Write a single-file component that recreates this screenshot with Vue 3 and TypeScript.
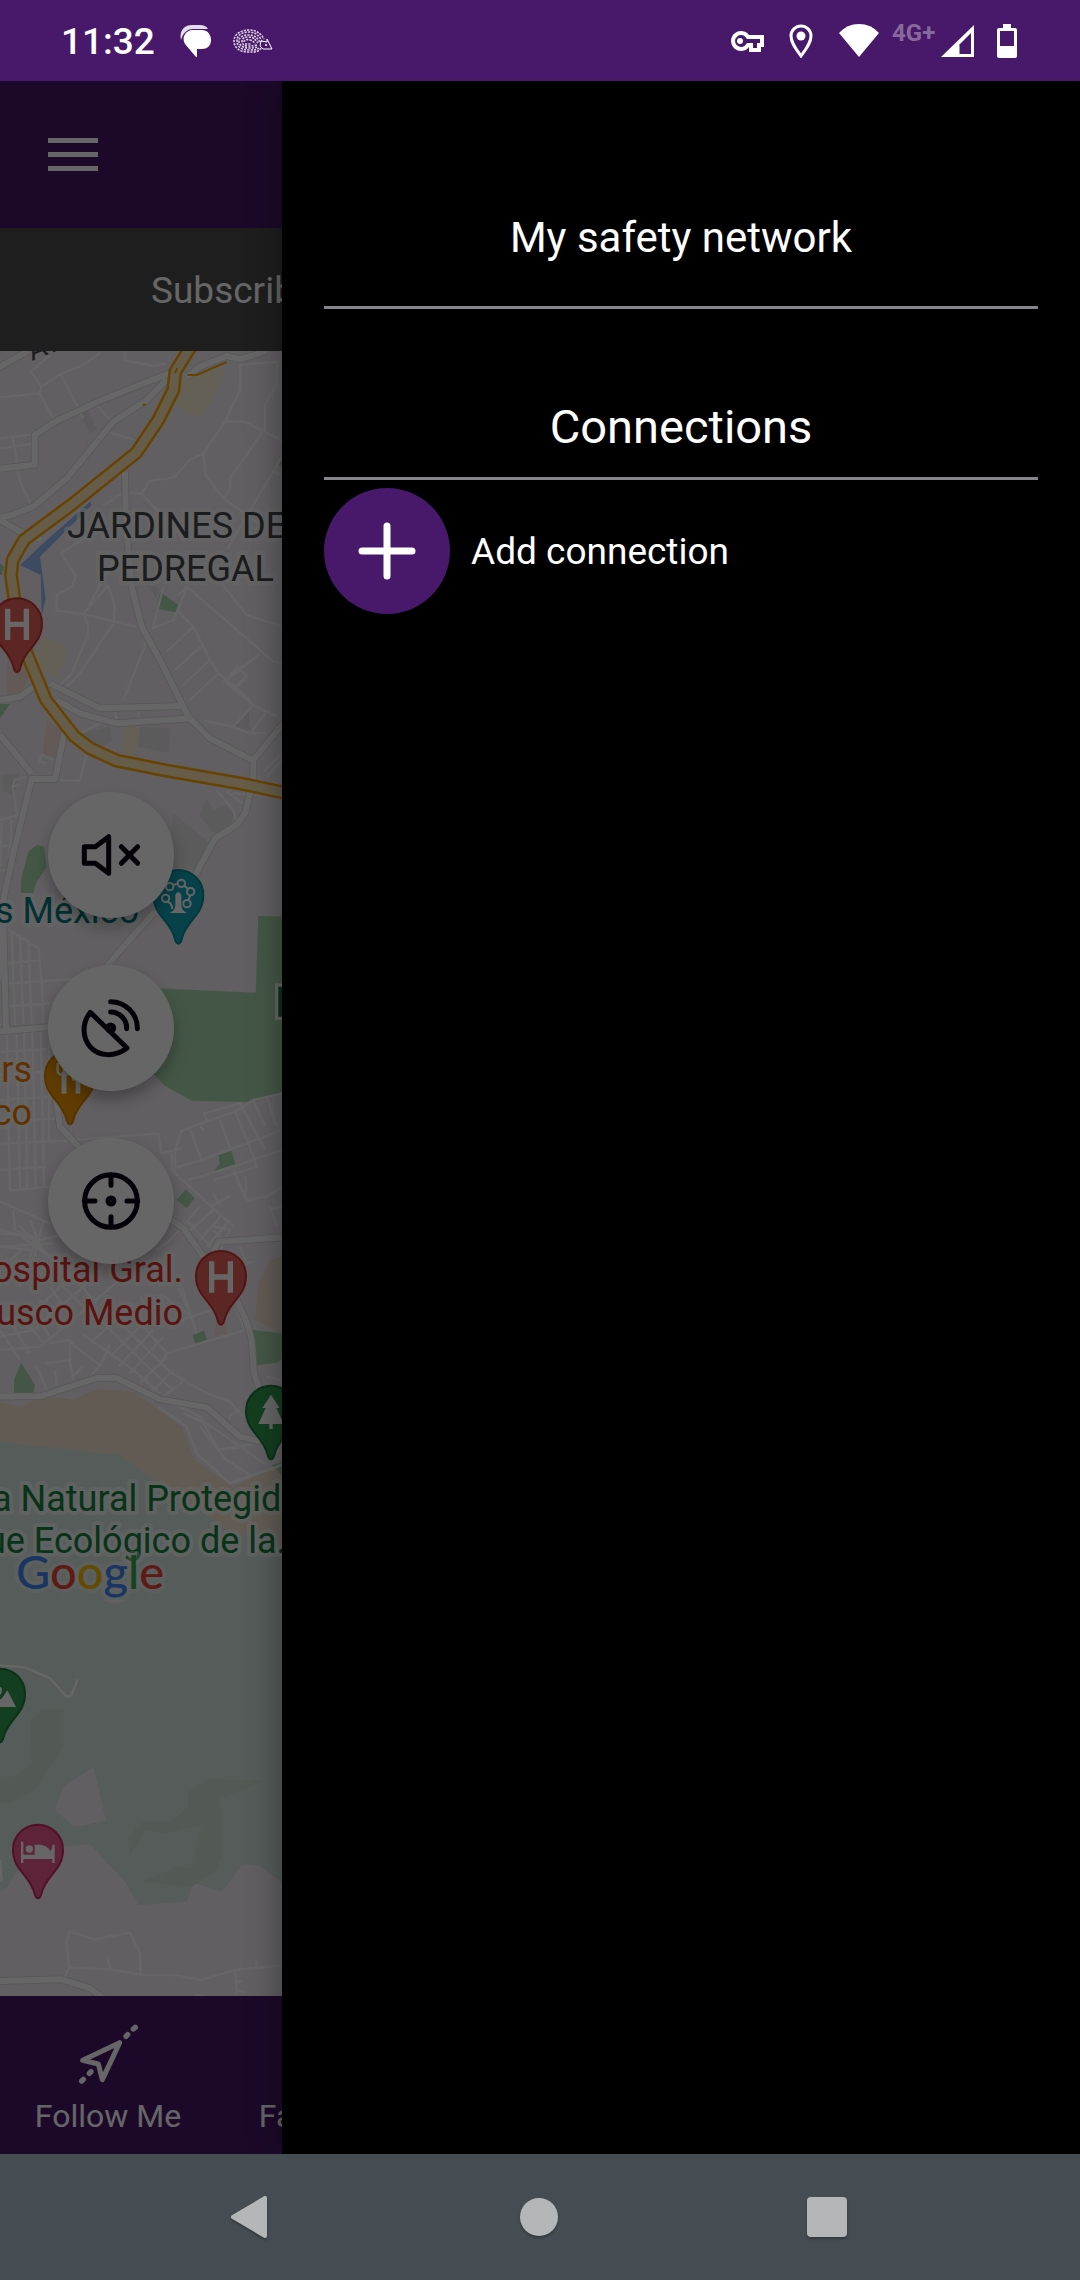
<script setup lang="ts">
interface Shape {
  y: number
  d: string
}
interface Pin {
  x: number
  y: number
  kind: 'hospital' | 'fun' | 'food' | 'tree' | 'peak' | 'hotel'
}
interface Label {
  text: string
  x: number
  y: number
  tone: string
  anchor: 'start' | 'end'
}

// Map geometry is drawn on a grid three times finer than the screen.
const parks: Shape[] = [
  { y: 1020, d: 'M470 805L480 755L535 795L530 818ZM0 670L12 680L5 705H0ZM835 375L850 350V380Z' },
  { y: 2040, d: 'M63 638V600L85 515L110 495L132 500L140 560L110 605L100 640ZM0 72H30L0 115Z' },
  { y: 2820, d: 'M775 -72L1400 -60V300L850 458L760 486L700 485L575 482L495 438L440 380L470 145L767 158Z' },
  { y: 2820, d: 'M655 645L695 632L706 672L642 693L660 670ZM530 780L558 748L584 775L560 805Z' },
  { y: 3660, d: 'M578 345L612 332L622 360L585 370ZM42 480L63 428L105 495L100 520H42ZM755 330L850 340V415L830 428L770 436ZM815 735L850 725V770Z' },
]
const sand: Shape[] = [
  { y: 3660, d: 'M0 545L60 560L130 530L220 538L290 508L400 515L470 565L545 620L585 720L700 800L850 730V985L800 945H700L600 870L480 790L360 705L0 665Z' },
  { y: 3660, d: 'M765 300L775 190L810 120L850 110V345Z' },
]
const plazas: Shape[] = [
  { y: 1020, d: 'M520 190L560 105L678 80L660 130L610 225L580 230ZM125 890L195 915L198 950L170 1015L100 970Z' },
  { y: 2040, d: 'M370 140H418L408 230L370 225Z' },
]
const clinics: Shape[] = [
  { y: 1020, d: 'M20 950L60 940L85 1010L65 1060L20 1065Z' },
  { y: 2040, d: 'M140 120L185 150L165 235L128 220Z' },
  { y: 3660, d: 'M650 290L675 290L682 340L642 350Z' },
]
const blocks: Shape[] = [
  { y: 1020, d: 'M230 205L260 200L290 270L270 280ZM440 735L480 745L470 775Z' },
  { y: 2040, d: 'M420 140L510 145L505 218L410 200ZM240 160L330 140L335 185L300 205L245 190ZM620 355L640 390L670 375L700 400L695 430L640 460L598 405ZM520 400L625 485L590 570L500 560Z' },
  { y: 2040, d: 'M5 285L60 280L40 345L10 335ZM705 140L745 90L750 150Z' },
]
const forest =
  'M0 4325L360 4365L480 4450L600 4530L700 4605L800 4605L850 4645L1400 4800V5500L850 5650L780 5597L727 5595L665 5675L580 5648L560 5705L415 5715L375 5645L270 5532L190 5540L100 5550L60 5600L20 5665L0 5675Z'
const clearing = 'M280 5300L318 5463L222 5480L165 5430L190 5360ZM310 4800A40 20 0 0 0 380 4800Z'
const hills = [
  'M92 5160L130 5128H190V5235L110 5365L25 5410L0 5405V5330L45 5330L95 5290Z',
  'M565 5375L625 5337L790 5342L655 5400L665 5440V5570L650 5610L575 5660L425 5645L530 5600L575 5605L605 5475L500 5500L435 5490L390 5565L385 5515L425 5465H515L565 5420Z',
]
const streets: Shape[] = [
  {
    y: 1020,
    d: 'M150 45L92 95L125 140L118 160L0 172M125 140L182 102L250 75L300 38M118 160L160 235M182 102L250 235M375 33V62L465 78L500 70M290 195L330 240M330 278L405 300M0 295L104 283M0 325L95 312M38 290L60 425L95 500M720 70V150L675 245L610 340L570 360L523 412L447 424L425 462L375 455L310 495M675 245H735L785 272L846 302M720 75L830 65V130L795 195V265L690 415L692 445L670 475M610 340L617 405L670 475L790 560M846 350L680 630M820 395L846 405M425 462L500 540L560 600M183 640L228 708L215 740L170 765V812L250 822L410 860M183 640L260 590M250 822L325 735M265 800L345 650M325 735L345 805L340 850L240 1000L200 1040M250 822L265 855L262 890L215 1000L180 1035M455 865L520 840L560 745M460 860L490 740M440 905L370 1080M535 765L560 740L820 965L846 972M535 815L580 860L630 960L655 1000L750 1080M580 860L500 935M610 915L525 990M630 960L550 1035M655 1000L570 1080M670 735L740 825L846 860M780 940L680 1020L712 982L740 1007L700 1050',
  },
  {
    y: 2040,
    d: 'M670 0L760 75L800 95L830 110M700 25L730 0M760 75L700 140M800 95L755 155M610 122L690 138L750 160L800 158M346 95L350 125M415 95L417 125M240 300L262 215M180 302H240L245 290M160 240L125 225L118 245L140 250M80 290L45 300L38 320L60 315M38 320L50 400M0 420L60 405M5 425L0 560M35 420L28 540M0 500L40 495M0 572L20 570M320 120L240 160M680 335L730 370M790 275L846 220M800 290L846 240M700 340L790 345M650 330L700 390L710 430',
  },
  {
    y: 2820,
    d: 'M12 -40L115 25L125 120L130 250M35 -30L45 255M60 -15L70 250M85 0L95 250M20 70L118 62M20 130L210 118M30 198L150 190M20 280L30 750M50 275L60 745M72 272L82 742M97 270L107 740M122 270L132 738M147 300V600M0 335L140 328M0 405L130 395M0 480L160 470M0 545L170 535M0 610L200 602M0 690L140 680M30 752L150 740M200 602L475 580L485 640L545 625M545 572L620 545L705 515L760 480L846 460M545 572L525 630V700L700 860M620 545L612 520L720 490L795 630M570 570L605 660M600 560L612 570M660 540L690 625M705 515L745 610L770 680L640 720M760 480L795 560M800 470L830 560M530 682L605 660L700 625L846 570M565 720L700 680L846 630M515 640V690L680 840M700 690L740 780L800 770L846 740M735 710L740 745L730 770M655 785L680 770M660 795L640 760M630 800L690 770M810 800L830 860M810 810L846 797M640 810L560 880L520 830M670 820L600 900M600 800L510 900L470 930M560 840L640 930M640 860L690 870L650 950M0 785L150 850M40 810L45 870L110 895M0 880L60 885L160 960M110 895L30 960M130 840L100 960M60 860L190 990M0 920L90 930',
  },
  {
    y: 3660,
    d: 'M0 30L120 60L200 40M90 0L130 100M0 80L160 70M110 55L60 200M0 350L100 330L250 200L330 120M0 300L90 290L230 150M0 390L120 380L300 230L370 170M0 330L60 420M20 290L90 400M50 270L130 370M90 260L150 350M120 240L190 330M150 200L220 300M180 190L260 270M210 160L290 250M150 370L210 360L225 380L305 440M135 430L210 420M210 360V430L220 480M165 450L170 495M110 440L140 510M330 370L305 430L270 470M215 475L245 440M250 345L330 400L400 450L480 520M300 300L470 465L520 510M330 280L515 460L620 520L690 545L730 590M370 250L500 400M420 230L470 300M270 370L400 250M330 410L440 300M355 440L460 330M390 460L490 350M420 490L500 410M450 520L520 450M475 540L530 500M500 400L735 330L700 240M500 400L475 440M535 205L575 290L520 310M575 290L650 265M480 220L575 290M545 200L590 340M640 30L680 70M690 0L620 80M720 80L740 130L760 125M520 550L600 590L655 690M550 580L620 610L800 735M475 560L560 620L590 700L690 790L846 735M655 690L735 680M600 620L680 720L750 765M655 690L770 670M710 575L690 585V600M545 480L540 495M800 470L846 480',
  },
  {
    y: 4800,
    d: 'M0 196L75 202L150 235L200 290L213 288L233 238M195 1130L207 1103L200 1025L208 995L284 1018L390 998L421 1060V1122M207 1103L330 1108L421 1124L520 1125L605 1140L705 1110L846 1096M330 1108L322 1070M770 1105V1080M706 1112L710 1185M710 1148L725 1142M710 1170L738 1176M585 1186L615 1190M0 780L5 845',
  },
]
const roads: Shape[] = [
  {
    y: 1020,
    d: 'M-10 85L85 33M-10 387L104 374V285L165 245L290 187L430 130L510 100M-10 535L35 525L100 500L200 415L340 245L440 180L500 120M375 395L378 560L395 740L425 860L480 960L565 1130L630 1195L760 1262M0 540L60 575L125 600M560 110L600 80L680 48L720 58L800 33',
  },
  {
    y: 2040,
    d: 'M110 15L60 50L0 60M150 10L300 85L545 78M170 60L240 100L350 130L575 115M0 165L95 280M195 150L165 297H95L40 520L10 660L-5 900M850 130L760 240V300L735 400L710 435L645 475L600 560L540 670L460 700L370 800L320 860',
  },
  {
    y: 2820,
    d: 'M10 -60L18 270M-10 275L160 260M165 460L180 560L240 625M500 830L550 865L625 970L655 905L850 892',
  },
  {
    y: 3660,
    d: 'M710 240L740 305L755 360L762 460L780 510M-10 530L125 528L290 474H350L480 538L620 562L720 650L780 665',
  },
  { y: 4800, d: 'M-10 1143L185 1138L270 1165L310 1195' },
]
const highway =
  'M572 1040L526 1115L520 1170L475 1260L409 1358L220 1510L72 1620L38 1680L33 1725L45 1810L80 1960L138 2100L222 2208L270 2245L350 2282L500 2312L720 2350L900 2388'

const pins: Pin[] = [
  { x: 51, y: 1870, kind: 'hospital' },
  { x: 535, y: 2685, kind: 'fun' },
  { x: 210, y: 3227, kind: 'food' },
  { x: 663, y: 3828, kind: 'hospital' },
  { x: 813, y: 4232, kind: 'tree' },
  { x: 0, y: 5081, kind: 'peak' },
  { x: 114, y: 5549, kind: 'hotel' },
]
const labels: Label[] = [
  { text: 'JARDINES DEL', x: 67, y: 538, tone: 'district', anchor: 'start' },
  { text: 'PEDREGAL', x: 97, y: 581, tone: 'district', anchor: 'start' },
  { text: 'Six Flags México', x: 139, y: 923, tone: 'fun', anchor: 'end' },
  { text: 'rs', x: 32, y: 1082, tone: 'food', anchor: 'end' },
  { text: 'co', x: 32, y: 1125, tone: 'food', anchor: 'end' },
  { text: 'Hospital Gral.', x: 183, y: 1282, tone: 'health', anchor: 'end' },
  { text: 'Ajusco Medio', x: 183, y: 1325, tone: 'health', anchor: 'end' },
  { text: 'a Natural Protegida', x: -8, y: 1511, tone: 'nature', anchor: 'start' },
  { text: 'ue Ecológico de la...', x: -14, y: 1553, tone: 'nature', anchor: 'start' },
]
const logo: [string, string][] = [
  ['G', '#4285f4'],
  ['o', '#ea4335'],
  ['o', '#fbbc04'],
  ['g', '#4285f4'],
  ['l', '#34a853'],
  ['e', '#ea4335'],
]
</script>

<template>
  <div class="phone">
    <header class="status">
      <div class="status-left">
        <time class="clock">11:32</time>
        <svg class="chat" width="32" height="32" viewBox="0 0 32 32" fill="#fff">
          <path d="M1 15C-1 6 4 0 12 0h8c4 0 6 1 8 4H13C7 4 3 8 1 15z" fill-opacity=".85" />
          <path d="M13 5h9c5 0 9 4 9 10s-4 9-9 9h-5v8h-1L5 19C1 12 6 5 13 5z" />
        </svg>
        <svg class="hedgehog" width="40" height="26" viewBox="0 0 40 26" fill="none" stroke="#fff">
          <g stroke-width="1.6" stroke-dasharray="2.2 1.1" stroke-opacity=".8">
            <path d="M28 20C26 24 22 24 15 24C6 24 1 19 1 13C1 6 8 2 16 2S28 6 31 11" />
            <path d="M26 20C24 22 20 22 15 22C8 22 4 18 4 13C4 7 9 4 16 4S26 8 29 13" />
            <path d="M24 19C22 20 19 20 15 20C10 20 6 17 6 13C6 9 10 7 16 7S24 10 27 14" />
            <path d="M24 17C20 18 18 18 15 18C11 18 9 16 9 13C9 10 12 9 16 9S22 11 25 15" />
            <path d="M11 14C11 12 14 11 17 12S21 14 22 16M12 16H18" />
          </g>
          <path d="M28 13L34 14V11L36 15L39 21H30L27 18Z" />
          <circle cx="33" cy="17" r="1" fill="#fff" stroke="none" />
        </svg>
      </div>
      <div class="status-right">
        <svg width="42" height="34" viewBox="0 0 42 34">
          <path d="M22 13A8 8 0 1 0 22 21H25V26H33V21H36V13Z" fill="none" stroke="#fff" stroke-width="4" />
          <circle cx="14" cy="17" r="3" fill="#fff" />
        </svg>
        <svg width="50" height="34" viewBox="0 0 50 34">
          <path d="M25 32C20 25 15 19 15 12a10 10 0 0 1 20 0c0 7-5 13-10 20z" fill="none" stroke="#fff" stroke-width="3" />
          <circle cx="25" cy="12" r="4.500" fill="#fff" />
        </svg>
        <svg width="50" height="34" viewBox="0 0 50 34">
          <path d="M5 9Q13 0 25 0T45 9L25 33Z" fill="#fff" />
        </svg>
        <div class="mobile">
          <span class="network">4G+</span>
          <svg width="36" height="34" viewBox="0 0 36 34">
            <path d="M34 1V33H1Z" fill="#fff" />
            <path d="M31 9V30H19.500V20.500Z" fill="#48186a" />
          </svg>
        </div>
        <svg width="46" height="34" viewBox="0 0 46 34">
          <path d="M13 4H19V0H27V4H31Q33 4 33 6V32Q33 34 31 34H15Q13 34 13 32V6Q13 4 15 4Z" fill="#fff" />
          <path d="M16 7H30V22H16Z" fill="#48186a" />
        </svg>
      </div>
    </header>

    <div class="stage">
      <main class="home">
        <div class="topbar">
          <button class="menu" type="button" aria-label="Menu"><i></i><i></i><i></i></button>
        </div>
        <div class="notice">Subscribe</div>
        <section class="map">
          <svg class="canvas" viewBox="0 351 1080 1645" preserveAspectRatio="xMinYMin slice">
            <g transform="scale(.333333)">
              <path :d="forest" fill="#d5e6de" />
              <path v-for="d in hills" :key="d" :d="d" fill="#cfe0d5" />
              <path :d="clearing" fill="#f5edf5" />
              <path v-for="s in blocks" :key="s.d" :d="s.d" :transform="`translate(0 ${s.y})`" fill="#e4e4e4" />
              <path v-for="s in sand" :key="s.d" :d="s.d" :transform="`translate(0 ${s.y})`" fill="#f5e4d2" />
              <path v-for="s in plazas" :key="s.d" :d="s.d" :transform="`translate(0 ${s.y})`" fill="#fbf0d4" />
              <path v-for="s in clinics" :key="s.d" :d="s.d" :transform="`translate(0 ${s.y})`" fill="#f8e2dc" />
              <path v-for="s in parks" :key="s.d" :d="s.d" :transform="`translate(0 ${s.y})`" fill="#aad9b0" />
              <path d="M60 1695L130 1630L270 1505L275 1515L120 1670L137 1795L125 1850L122 1725Z" fill="#96bcf5" />
              <path v-for="s in streets" :key="s.d" :d="s.d" :transform="`translate(0 ${s.y})`" class="street" />
              <path v-for="s in roads" :key="'c' + s.y" :d="s.d" :transform="`translate(0 ${s.y})`" class="casing" />
              <path v-for="s in roads" :key="'r' + s.y" :d="s.d" :transform="`translate(0 ${s.y})`" class="road" />
              <path :d="highway" class="highway-edge" />
              <path :d="highway" class="highway" />
              <path d="M562 1125H590L680 1086M524 1120L532 1105M428 1214H438" class="ramp" />
              <path d="M830 2955H900V3055H830Z" fill="#1e8240" stroke="#fff" stroke-width="10" />
            </g>

            <text class="street-name" x="32" y="361" transform="rotate(-22 32 361)">Av</text>
            <text v-for="l in labels" :key="l.text" :class="['label', l.tone]" :x="l.x" :y="l.y" :text-anchor="l.anchor">{{ l.text }}</text>

            <g transform="scale(.333333)">
              <g v-for="(p, i) in pins" :key="i" :transform="`translate(${p.x} ${p.y})`" :class="['pin', p.kind]">
                <path
                  class="drop"
                  d="M0 146C-5 146-8 141-10 133C-22 76-75 64-75 0A75 75 0 1 1 75 0C75 64 22 76 10 133C8 141 5 146 0 146Z"
                />
                <path v-if="p.kind === 'hospital'" d="M-28 -44V50M28 -44V50M-28 3H28" fill="none" stroke="#fff" stroke-width="16" />
                <g v-else-if="p.kind === 'fun'">
                  <path d="M-26 54Q-9 46-9 30V0Q0-18 9 0V30Q9 46 26 54Z" fill="#fff" />
                  <g fill="none" stroke="#fff" stroke-width="6">
                    <circle cx="-38" cy="10" r="11" /><circle cx="-26" cy="-25" r="11" /><circle cx="9" cy="-35" r="11" />
                    <circle cx="37" cy="-10" r="11" /><circle cx="26" cy="26" r="11" />
                    <path d="M-36 20Q-20 20-18 42M-16-30L-2-34M18-28L30-18M36 0L30 16" />
                  </g>
                </g>
                <g v-else-if="p.kind === 'food'" fill="none" stroke="#fff">
                  <path d="M-18 -10V54" stroke-width="15" />
                  <path d="M-37-38V-14Q-37 -2-18 -2Q0 -2 0-14V-38M-18-38V-8" stroke-width="7" />
                  <path d="M24-38V54M20 -36Q2 -20 12 8H24" stroke-width="14" />
                </g>
                <path v-else-if="p.kind === 'tree'" d="M0-48L26-8H16L38 40H5V55H-5V40H-38L-16-8H-26Z" fill="#fff" />
                <path v-else-if="p.kind === 'peak'" d="M-40 40L-20 5L-5 18L5 15L22-10L48 40ZM-14-10A10 10 0 1 1 5-8A10 10 0 1 1-14-10Z" fill="#fff" />
                <g v-else fill="#fff">
                  <path d="M-51-24H-44V15H43V-14H50V40H43V28H-44V40H-51Z" />
                  <circle cx="-26" cy="-2" r="11" />
                  <path d="M-10-15H8Q28-13 38 5L48-18V18H-10Z" />
                </g>
              </g>
            </g>
            <text class="logo" x="16" y="1589"><tspan v-for="([c, color], i) in logo" :key="i" :fill="color">{{ c }}</tspan></text>
          </svg>

          <div class="tools">
            <button type="button" aria-label="Sound off">
              <svg viewBox="143 336 378 378">
                <path d="M252 500H285L325 470V580L285 550H252Z" />
                <path d="M363 500L412 550M412 500L363 550" />
              </svg>
            </button>
            <button type="button" aria-label="Tracking">
              <svg viewBox="143 75 378 378">
                <path d="M270 217L380 324A79 79 0 1 1 270 217Z" class="hidden-rim" />
                <path d="M270 217L380 324C344 352 296 350 270 321C244 292 246 246 270 217Z" />
                <path d="M331 216A48 48 0 0 1 379 266M331 185A80 80 0 0 1 411 266" />
                <circle cx="331" cy="264" r="9" />
              </svg>
            </button>
            <button type="button" aria-label="Center map">
              <svg viewBox="143 594 378 378">
                <circle cx="332" cy="783" r="79" />
                <path d="M332 705V736M332 830V860M252 783H284M380 783H412" />
                <circle cx="332" cy="783" r="9" />
              </svg>
            </button>
          </div>
        </section>

        <nav class="tabs">
          <button type="button">
            <svg width="63" height="63" viewBox="234 130 189 189" fill="none" stroke="#fff" stroke-width="15" stroke-linecap="round" stroke-linejoin="round">
              <path d="M251 242L362 189L310 300L298 253Z" />
              <path d="M381 170L386 165M403 148L409 143M271 281L276 276M248 304L253 299" stroke-width="16" />
            </svg>
            <span>Follow Me</span>
          </button>
          <button type="button">
            <svg width="63" height="63" viewBox="0 0 24 24" fill="none" stroke="#fff" stroke-width="2" stroke-linejoin="round">
              <path d="M12 3l3 6 6 1-4 5 1 6-6-3-6 3 1-6-4-5 6-1z" />
            </svg>
            <span>Favorites</span>
          </button>
        </nav>
      </main>

      <div class="scrim"></div>
      <aside class="drawer">
        <h1>My safety network</h1>
        <h2>Connections</h2>
        <button class="add" type="button">
          <span class="plus">
            <svg width="60" height="60" viewBox="0 0 60 60" stroke="#fff" stroke-width="7" stroke-linecap="round">
              <path d="M30 5V55M5 30H55" />
            </svg>
          </span>
          <span>Add connection</span>
        </button>
      </aside>
    </div>

    <footer class="system">
      <button type="button" aria-label="Back">
        <svg width="44" height="44" viewBox="0 0 44 44">
          <path d="M4 22L36 3V41Z" fill="#b3b7b8" stroke="#b3b7b8" stroke-width="4" stroke-linejoin="round" />
        </svg>
      </button>
      <button type="button" aria-label="Home">
        <svg width="44" height="44" viewBox="0 0 44 44"><circle cx="22" cy="22" r="19" fill="#b3b7b8" /></svg>
      </button>
      <button type="button" aria-label="Recent apps">
        <svg width="44" height="44" viewBox="0 0 44 44"><rect x="2" y="2" width="40" height="40" rx="4" fill="#b3b7b8" /></svg>
      </button>
    </footer>
  </div>
</template>

<style>
body {
  margin: 0;
  background: #000;
}
</style>

<style scoped>
.phone {
  display: flex;
  flex-direction: column;
  min-height: 100vh;
  overflow: hidden;
  font-family: Roboto, "Liberation Sans", sans-serif;
  color: #fff;
}
svg {
  display: block;
  flex: none;
}
button {
  margin: 0;
  padding: 0;
  border: 0;
  background: none;
  color: inherit;
  font: inherit;
}
.status {
  display: flex;
  align-items: center;
  justify-content: space-between;
  height: 81px;
  padding: 0 50px 0 61px;
  background: #48186a;
}
.status-left {
  display: flex;
  align-items: center;
}
.clock {
  padding-top: 2px;
  font-size: 37px;
  font-weight: 500;
  line-height: 44px;
}
.chat {
  margin-left: 25px;
}
.hedgehog {
  margin-left: 21px;
}
.status-right {
  display: flex;
  align-items: center;
  gap: 8px;
}
.mobile {
  display: flex;
  gap: 4px;
}
.network {
  width: 44px;
  font-size: 24px;
  font-weight: 700;
  line-height: 18px;
  color: #876a9c;
}
.stage {
  position: relative;
  display: flex;
  flex: 1;
  overflow: hidden;
}
.home {
  display: flex;
  flex-direction: column;
  flex: 1;
  min-width: 0;
}
.topbar {
  display: flex;
  align-items: center;
  height: 147px;
  padding: 0 48px;
  background: #48186a;
}
.menu {
  display: flex;
  flex-direction: column;
  gap: 9px;
  width: 50px;
}
.menu i {
  height: 5px;
  background: #fff;
}
.notice {
  padding: 2px 151px 0;
  background: #4d4d4d;
  font-size: 37px;
  line-height: 121px;
}
.map {
  position: relative;
  flex: 1;
  background: #f5edf5;
}
.canvas {
  position: absolute;
  inset: 0;
  width: 100%;
  height: 100%;
}
.street,
.casing,
.road,
.highway-edge,
.highway,
.ramp {
  fill: none;
  stroke: #fff;
  stroke-linejoin: round;
}
.street {
  stroke-width: 7px;
}
.casing {
  stroke: #d6d8da;
  stroke-width: 23px;
}
.road {
  stroke-width: 18px;
}
.highway-edge {
  stroke: #ffa800;
  stroke-width: 42px;
}
.highway {
  stroke: #fce9b8;
  stroke-width: 27px;
}
.ramp {
  stroke: #ffa800;
  stroke-width: 6px;
}
.label {
  font-size: 36px;
  paint-order: stroke;
  stroke: rgba(255, 255, 255, 0.6);
  stroke-width: 8px;
  stroke-linejoin: round;
}
.district {
  fill: #44484b;
}
.label.fun {
  fill: #00787d;
}
.label.food {
  fill: #f07c00;
}
.health {
  fill: #e03028;
}
.nature {
  fill: #148040;
}
.street-name {
  font-size: 28px;
  fill: #44484b;
}
.logo {
  font-family: Lato, sans-serif;
  font-size: 47px;
  font-weight: 500;
  paint-order: stroke;
  stroke: rgba(255, 255, 255, 0.4);
  stroke-width: 8px;
  stroke-linejoin: round;
}
.drop {
  stroke-width: 6px;
}
.hospital .drop {
  fill: #e4605a;
  stroke: #c8362f;
}
.pin.fun .drop {
  fill: #12a4b8;
  stroke: #0c8c9c;
}
.pin.food .drop {
  fill: #f09600;
  stroke: #d88200;
}
.tree .drop,
.peak .drop {
  fill: #329b50;
  stroke: #1e7a3c;
}
.hotel .drop {
  fill: #e8588c;
  stroke: #c8285e;
}
.tools {
  position: absolute;
  top: 441px;
  left: 48px;
  display: flex;
  flex-direction: column;
  gap: 47px;
}
.tools button {
  width: 126px;
  height: 126px;
  border-radius: 50%;
  background: #fff;
  box-shadow: 0 8px 16px rgba(0, 0, 0, 0.3);
}
.tools svg {
  width: 126px;
  height: 126px;
  fill: none;
  stroke: #0a0614;
  stroke-width: 15px;
  stroke-linecap: round;
  stroke-linejoin: round;
}
.tools .hidden-rim {
  display: none;
}
.tabs {
  display: flex;
  height: 158px;
  background: #48186a;
}
.tabs button {
  display: flex;
  flex-direction: column;
  align-items: center;
  gap: 11px;
  width: 20%;
  padding-top: 27px;
  font-size: 32px;
  line-height: 38px;
}
.scrim {
  position: absolute;
  inset: 0;
  background: rgba(0, 0, 0, 0.6);
}
.drawer {
  position: absolute;
  top: 0;
  right: 0;
  bottom: 0;
  left: 282px;
  box-sizing: border-box;
  padding: 0 42px;
  background: #000;
  box-shadow: 0 0 32px rgba(0, 0, 0, 0.4);
}
.drawer h1,
.drawer h2 {
  margin: 0;
  border-bottom: 3px solid #85858c;
  font-weight: 400;
  text-align: center;
}
.drawer h1 {
  padding: 132px 0 43px;
  font-size: 42px;
  line-height: 50px;
}
.drawer h2 {
  padding: 90px 0 22px;
  font-size: 47px;
  line-height: 56px;
}
.add {
  display: flex;
  align-items: center;
  gap: 21px;
  margin-top: 8px;
  font-size: 37px;
}
.plus {
  display: flex;
  align-items: center;
  justify-content: center;
  width: 126px;
  height: 126px;
  border-radius: 50%;
  background: #48186a;
}
.system {
  position: relative;
  display: flex;
  justify-content: center;
  height: 126px;
  padding-right: 2px;
  background: #454d52;
}
.system button {
  display: flex;
  align-items: center;
  justify-content: center;
  width: 288px;
}
.system svg {
  filter: drop-shadow(0 2px 1px rgba(0, 0, 0, 0.25));
}
</style>
